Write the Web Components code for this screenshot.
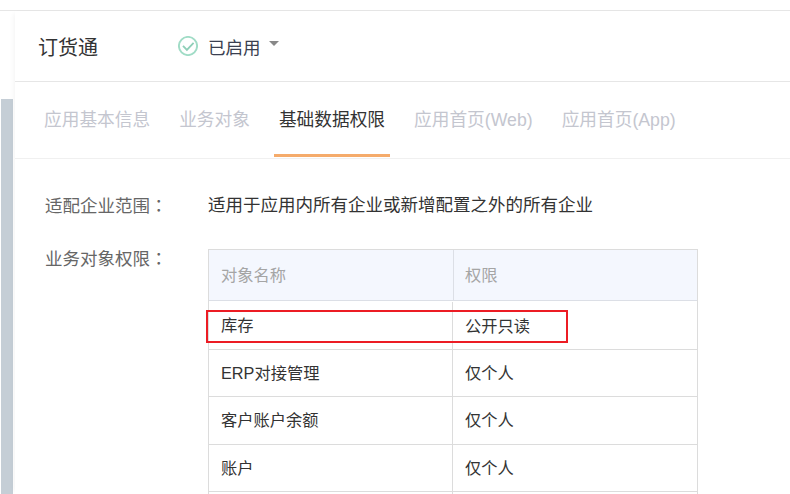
<!DOCTYPE html>
<html lang="zh">
<head>
<meta charset="utf-8">
<title>订货通</title>
<style>
html, body { margin: 0; height: 100%; overflow: hidden; background: #fff; }
body { font-family: "Liberation Sans", "Noto Sans CJK SC", sans-serif; }
</style>
</head>
<body>
<app-page>
  <app-header name="订货通" status="已启用"></app-header>
  <app-tabs>
    <tab-item>应用基本信息</tab-item>
    <tab-item>业务对象</tab-item>
    <tab-item active>基础数据权限</tab-item>
    <tab-item>应用首页(Web)</tab-item>
    <tab-item>应用首页(App)</tab-item>
  </app-tabs>
  <form-row label="适配企业范围" class="first">适用于应用内所有企业或新增配置之外的所有企业</form-row>
  <form-row label="业务对象权限">
    <perm-table>
      <perm-row head name="对象名称" value="权限"></perm-row>
      <perm-row name="库存" value="公开只读" marked></perm-row>
      <perm-row name="ERP对接管理" value="仅个人"></perm-row>
      <perm-row name="客户账户余额" value="仅个人"></perm-row>
      <perm-row name="账户" value="仅个人"></perm-row>
      <perm-row name="" value=""></perm-row>
    </perm-table>
  </form-row>
</app-page>

<script>
class appPage extends HTMLElement{
    constructor(){
        super();
        this.attachShadow({ mode: "open" });
    }

    connectedCallback() {
        this.shadowRoot.innerHTML = `
        <style>
:host{
  display: flex;
  flex-direction: column;
  height: 494px;
  overflow: hidden;
}
.top{
  height: 10px;
  flex: none;
  border-bottom: 1px solid #e6e6e6;
}
.body{
  flex: 1;
  display: flex;
  min-height: 0;
}
.rail{
  width: 15px;
  flex: none;
  display: flex;
  flex-direction: column;
  box-sizing: border-box;
  padding: 88px 2px 0 1px;
}
.thumb{
  flex: 1;
  background: #c5ced6;
}
.panel{
  flex: 1;
  min-width: 0;
  display: flex;
  flex-direction: column;
  box-shadow: -4px 0 5px -3px rgba(0,0,0,.05);
}
        </style>
        <div class="top"></div>
        <div class="body">
            <div class="rail"><div class="thumb"></div></div>
            <div class="panel"><slot></slot></div>
        </div>
        `;
    }
}

class appHeader extends HTMLElement{
    constructor(){
        super();
        this.attachShadow({ mode: "open" });
    }

    connectedCallback() {
        const name = this.getAttribute("name");
        const status = this.getAttribute("status");

        this.shadowRoot.innerHTML = `
        <style>
:host{
  display: flex;
  align-items: center;
  height: 70px;
  flex: none;
  padding-left: 23px;
  border-bottom: 1px solid #e6e6e6;
  color: #333;
}
.name{
  width: 140px;
  font-size: 20px;
}
.status{
  display: flex;
  align-items: center;
  gap: 10px;
  font-size: 17.5px;
  color: #3a3f50;
}
svg{
  display: block;
}
.caret{
  width: 0;
  height: 0;
  margin: 0 0 6px -2px;
  border-left: 5px solid transparent;
  border-right: 5px solid transparent;
  border-top: 5px solid #888;
}
        </style>
        <div class="name">${name}</div>
        <div class="status">
            <svg width="20" height="20" viewBox="0 0 20 20" fill="none">
                <circle cx="10" cy="10" r="9.1" stroke="#a0dcc6" stroke-width="1.9"/>
                <path d="M5 9.8l3.9 4.1 6.7-7" stroke="#8fcfb8" stroke-width="1.8"/>
            </svg>
            <span>${status}</span>
            <span class="caret"></span>
        </div>
        `;
    }
}

class appTabs extends HTMLElement{
    constructor(){
        super();
        this.attachShadow({ mode: "open" });
    }

    connectedCallback() {
        this.shadowRoot.innerHTML = `
        <style>
:host{
  display: flex;
  gap: 19px;
  height: 76px;
  flex: none;
  padding-left: 24px;
  border-bottom: 1px solid #f0f0f0;
}
        </style>
        <slot></slot>
        `;
    }
}

class tabItem extends HTMLElement{
    constructor(){
        super();
        this.attachShadow({ mode: "open" });
    }

    connectedCallback() {
        this.shadowRoot.innerHTML = `
        <style>
:host{
  display: flex;
  align-items: center;
  height: 75px;
  box-sizing: border-box;
  padding: 0 5px;
  font-size: 17.7px;
  color: #c4c6cf;
  border-bottom: 3px solid transparent;
}
:host([active]){
  color: #333;
  border-bottom-color: #f5ab6b;
}
        </style>
        <slot></slot>
        `;
    }
}

class formRow extends HTMLElement{
    constructor(){
        super();
        this.attachShadow({ mode: "open" });
    }

    connectedCallback() {
        const label = this.getAttribute("label");

        this.shadowRoot.innerHTML = `
        <style>
:host{
  display: flex;
  padding-left: 30px;
  font-size: 17.5px;
  line-height: 26px;
  color: #333;
}
:host(.first){
  padding-top: 33px;
  padding-bottom: 27px;
}
.label{
  width: 163px;
  height: 26px;
  flex: none;
  color: #666;
}
.colon{
  font-family: "Noto Sans CJK TC", sans-serif;
}
.value{
  flex: 1;
  min-width: 0;
}
        </style>
        <div class="label">${label}<span class="colon" lang="zh-Hant">：</span></div>
        <div class="value"><slot></slot></div>
        `;
    }
}

class permTable extends HTMLElement{
    constructor(){
        super();
        this.attachShadow({ mode: "open" });
    }

    connectedCallback() {
        this.shadowRoot.innerHTML = `
        <style>
:host{
  display: block;
  width: 490px;
  margin-top: 4px;
  box-sizing: border-box;
  border: 1px solid #dcdcdc;
  border-bottom: 0;
}
        </style>
        <slot></slot>
        `;
    }
}

class permRow extends HTMLElement{
    constructor(){
        super();
        this.attachShadow({ mode: "open" });
    }

    connectedCallback() {
        const name = this.getAttribute("name");
        const value = this.getAttribute("value");

        this.shadowRoot.innerHTML = `
        <style>
:host{
  display: grid;
  grid-template-columns: 243px 1fr;
  height: 47.33px;
  box-sizing: border-box;
  position: relative;
  font-size: 16.25px;
  line-height: 20px;
  color: #333;
  border-bottom: 1px solid #dcdcdc;
}
:host([head]){
  height: 51px;
  background: #f4f7fe;
  color: #a5a5a5;
  border-bottom-color: #dcdfe6;
}
:host([marked]){
  height: 49px;
}
.cell{
  display: flex;
  align-items: center;
  padding-left: 12px;
}
.cell + .cell{
  border-left: 1px solid #dcdcdc;
}
:host([head]) .cell + .cell{
  margin-left: 1px;
  padding-left: 11px;
  border-left-color: #dcdfe6;
}
:host([marked]) .cell + .cell{
  margin-top: 1px;
}
.mark{
  position: absolute;
  left: -3px;
  top: 9px;
  width: 362px;
  height: 33px;
  box-sizing: border-box;
  border: 2px solid #ec1c24;
}
        </style>
        <div class="cell">${name}</div>
        <div class="cell">${value}</div>
        ${this.hasAttribute("marked") ? `<div class="mark"></div>` : ""}
        `;
    }
}

customElements.define("app-page", appPage);
customElements.define("app-header", appHeader);
customElements.define("app-tabs", appTabs);
customElements.define("tab-item", tabItem);
customElements.define("form-row", formRow);
customElements.define("perm-table", permTable);
customElements.define("perm-row", permRow);
</script>
</body>
</html>
